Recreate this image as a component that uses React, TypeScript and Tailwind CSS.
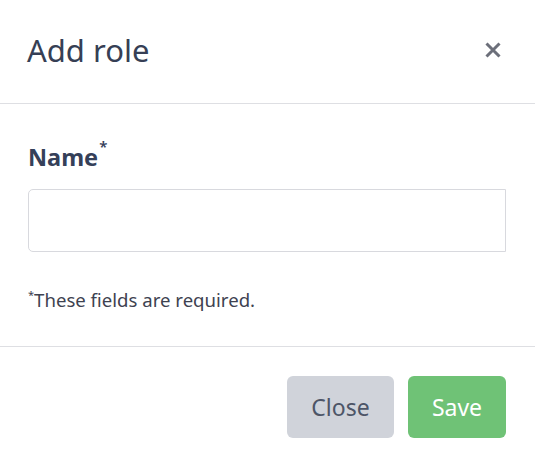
import React from "react";

export default function App() {
  return (
    <div
      className="w-[535px] h-[458px] bg-white overflow-hidden"
      style={{ fontFamily: '"Noto Sans", "Open Sans", sans-serif' }}
    >
      <div className="h-[104px] flex items-center justify-between pl-[27px] pr-[34px] border-b border-[#dedfe3]">
        <h1 className="text-[31px] leading-[40px] text-[#363f55] mt-[-3px]">Add role</h1>
        <button className="text-[#6c6f7a] mt-[-4px]" aria-label="Close">
          <svg width="16" height="16" viewBox="0 0 16 16">
            <path d="M1.5 1.5L14.5 14.5M14.5 1.5L1.5 14.5" stroke="currentColor" strokeWidth="3" strokeLinecap="butt" />
          </svg>
        </button>
      </div>
      <div className="pl-[28px] pr-[29px] pt-[38px] h-[243px] border-b border-[#dedfe3]">
        <label className="flex items-start text-[23.5px] leading-[30px] font-bold text-[#354059]">
          Name<span className="text-[15px] leading-[15px] font-semibold mt-[-3px] ml-[1px]">*</span>
        </label>
        <input
          className="mt-[17px] block w-full h-[63px] border border-[#d8d9de] rounded-l-[5px] outline-none"
          type="text"
        />
        <p className="mt-[35px] flex items-start text-[18.6px] leading-[26px] text-[#3e4250]">
          <span className="text-[11px] leading-[11px] mt-[2px]">*</span>These fields are required.
        </p>
      </div>
      <div className="flex justify-end gap-[14px] pt-[29px] pr-[29px]">
        <button className="w-[107px] h-[62px] rounded-[6px] bg-[#d0d3da] text-[23px] text-[#4d5567]">
          Close
        </button>
        <button className="w-[98px] h-[62px] rounded-[6px] bg-[#6fc276] text-[23px] text-white">
          Save
        </button>
      </div>
    </div>
  );
}
